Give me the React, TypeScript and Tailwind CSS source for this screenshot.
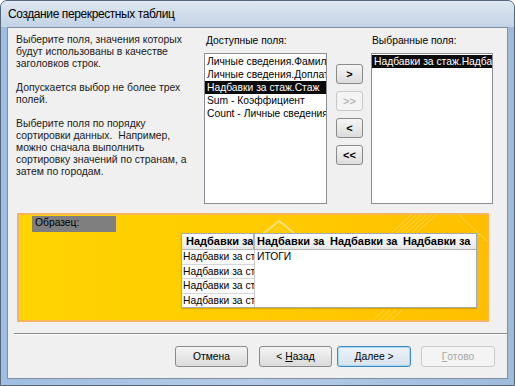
const availableFields = [
  "Личные сведения.Фамилия",
  "Личные сведения.Доплата",
  "Надбавки за стаж.Стаж",
  "Sum - Коэффициент",
  "Count - Личные сведения.Фамилия",
];

function MoveButton({ label, disabled }: { label: string; disabled?: boolean }) {
  return (
    <div
      className={
        "w-[27px] h-[20px] flex items-center justify-center rounded-[3px] border text-[11px] font-bold " +
        (disabled
          ? "border-[#c5c9cc] bg-[#f4f4f4] text-[#b8b8b8]"
          : "border-[#8a8a8a] bg-gradient-to-b from-[#f6f6f6] to-[#dcdcdc] text-black")
      }
    >
      {label}
    </div>
  );
}

function DialogButton({
  children,
  width,
  variant = "normal",
  className = "",
}: {
  children: React.ReactNode;
  width: string;
  variant?: "normal" | "default" | "disabled";
  className?: string;
}) {
  const look =
    variant === "disabled"
      ? "border-[#c8cbce] bg-[#f4f4f4] text-[#a8a8a8]"
      : variant === "default"
      ? "border-[#3c8ac4] bg-gradient-to-b from-[#eef4f9] to-[#d6e2ec] text-black shadow-[inset_0_0_0_1px_#a9d6f5]"
      : "border-[#8a8a8a] bg-gradient-to-b from-[#f4f4f4] to-[#dadada] text-black";
  return (
    <div className={`${width} h-[21px] flex items-center justify-center rounded-[3px] border text-[10.3px] ${look} ${className}`}>
      {children}
    </div>
  );
}

export default function App() {
  return (
    <div className="w-[515px] h-[386px] overflow-hidden bg-white font-['Liberation_Sans',Arial,sans-serif]">
      <div className="w-full h-full flex flex-col rounded-t-[7px] border border-[#56677c] bg-gradient-to-r from-[#9fbde0] via-[#b3cbe8] to-[#9ebbdd]">
        {/* title bar */}
        <div className="h-[26px] shrink-0 flex items-center pl-[7px] rounded-t-[6px] bg-gradient-to-b from-[#dfe8f2] via-[#d0dcea] to-[#c3d3e6] text-[12px] tracking-[-0.4px] text-black">
          Создание перекрестных таблиц
        </div>

        <div className="flex-1 mx-[6px] mb-[6px] border border-[#7f8ea1] bg-[#f0f0f0] flex flex-col text-[10.3px] text-black">
          {/* top section */}
          <div className="flex h-[176px] shrink-0">
            <div className="w-[196px] shrink-0 pl-[8px] pt-[6px] text-[10.4px] leading-[12px] text-[#1a1a1a] whitespace-nowrap">
              <p>
                Выберите поля, значения которых
                <br />
                будут использованы в качестве
                <br />
                заголовков строк.
              </p>
              <p className="mt-[12px]">
                Допускается выбор не более трех
                <br />
                полей.
              </p>
              <p className="mt-[12px]">
                Выберите поля по порядку
                <br />
                сортировки данных.&nbsp; Например,
                <br />
                можно сначала выполнить
                <br />
                сортировку значений по странам, а
                <br />
                затем по городам.
              </p>
            </div>

            <div className="flex flex-col pt-[6px]">
              <div className="h-[13px] leading-[13px] pl-[2px]">Доступные поля:</div>
              <div className="mt-[6px] w-[123px] h-[151px] border border-[#8a8f96] bg-white pt-[1px] overflow-hidden">
                {availableFields.map((f, i) => (
                  <div
                    key={f}
                    className={
                      "h-[13px] leading-[13px] pl-[2px] whitespace-nowrap overflow-hidden " +
                      (i === 2 ? "bg-[#0a0a0a] text-white" : "")
                    }
                  >
                    {f}
                  </div>
                ))}
              </div>
            </div>

            <div className="ml-[9px] pt-[36px] flex flex-col gap-[7px]">
              <MoveButton label=">" />
              <MoveButton label=">>" disabled />
              <MoveButton label="<" />
              <MoveButton label="<<" />
            </div>

            <div className="ml-[8px] flex flex-col pt-[6px]">
              <div className="h-[13px] leading-[13px] pl-[1px]">Выбранные поля:</div>
              <div className="mt-[6px] w-[122px] h-[151px] border border-[#8a8f96] bg-white pt-[1px] overflow-hidden">
                <div className="h-[13px] leading-[13px] pl-[2px] whitespace-nowrap overflow-hidden bg-[#0a0a0a] text-white">
                  Надбавки за стаж.Надбавка
                </div>
              </div>
            </div>
          </div>

          {/* sample */}
          <div className="relative ml-[9px] mt-[9px] w-[472px] h-[109px] shrink-0 border-2 border-[#f8b45c] bg-gradient-to-r from-[#ffd400] via-[#ffcc00] to-[#ffbf00] overflow-hidden">
            <svg className="absolute inset-0 pointer-events-none" width="472" height="109">
              <path d="M230 30 L260 6 L290 30" fill="none" stroke="#ffe27a" strokeWidth="2" />
              <path d="M238 30 L260 12 L282 30" fill="none" stroke="#ffd84a" strokeWidth="1" />
              <g stroke="#ffd95c" strokeWidth="1" opacity="0.8">
                <line x1="370" y1="20" x2="392" y2="0" />
                <line x1="375" y1="20" x2="397" y2="0" />
                <line x1="380" y1="20" x2="402" y2="0" />
                <line x1="385" y1="20" x2="407" y2="0" />
                <line x1="390" y1="20" x2="412" y2="0" />
                <line x1="395" y1="20" x2="417" y2="0" />
                <line x1="440" y1="0" x2="470" y2="28" />
                <line x1="350" y1="109" x2="365" y2="95" />
                <line x1="356" y1="109" x2="371" y2="95" />
                <line x1="362" y1="109" x2="377" y2="95" />
                <line x1="368" y1="109" x2="383" y2="95" />
              </g>
            </svg>

            <div className="absolute left-[13px] top-[1px] w-[84px] h-[16px] bg-[#7f7f7f] pl-[3px] leading-[14px] text-[10.3px] text-black">
              Образец:
            </div>

            {/* preview table */}
            <div className="absolute left-[162px] top-[18px] w-[296px] h-[75px] border border-[#a8a8a8] bg-white flex flex-col text-[10.3px] leading-[13px] shadow-[0_1px_1px_rgba(0,0,0,0.15)]">
              <div className="h-[16px] flex border-b border-[#b4b4b4] bg-gradient-to-b from-[#ffffff] to-[#e6e6e6] font-bold text-[11px] whitespace-nowrap">
                <div className="w-[73px] pl-[4px] overflow-hidden border-r-2 border-[#b0b0b0] leading-[15px]">Надбавки за</div>
                <div className="w-[73px] pl-[2px] overflow-hidden leading-[15px]">Надбавки за</div>
                <div className="w-[73px] pl-[2px] overflow-hidden leading-[15px]">Надбавки за</div>
                <div className="flex-1 pl-[2px] overflow-hidden leading-[15px]">Надбавки за</div>
              </div>
              <div className="flex-1 flex">
                <div className="w-[73px] flex flex-col border-r border-[#c8c8c8] whitespace-nowrap">
                  <div className="flex-1 overflow-hidden pl-[1px] border-b border-[#d6d6e0]">Надбавки за ст</div>
                  <div className="flex-1 overflow-hidden pl-[1px] border-b border-[#d6d6e0]">Надбавки за ст</div>
                  <div className="flex-1 overflow-hidden pl-[1px] border-b border-[#d6d6e0]">Надбавки за ст</div>
                  <div className="flex-1 overflow-hidden pl-[1px]">Надбавки за ст</div>
                </div>
                <div className="flex-1 pl-[2px]">ИТОГИ</div>
              </div>
            </div>
          </div>

          {/* separator */}
          <div className="ml-[6px] mt-[11px] h-[2px] shrink-0 border-t border-[#8c8c8c] border-b border-b-white" />

          {/* buttons */}
          <div className="mt-[11px] flex justify-end pr-[12px]">
            <DialogButton width="w-[73px]">Отмена</DialogButton>
            <DialogButton width="w-[73px]" className="ml-[11px]">
              &lt; <span className="underline ml-[3px]">Н</span>азад
            </DialogButton>
            <DialogButton width="w-[74px]" variant="default" className="ml-[5px]">
              <span className="underline">Д</span>алее &gt;
            </DialogButton>
            <DialogButton width="w-[74px]" variant="disabled" className="ml-[10px]">
              <span className="underline">Г</span>отово
            </DialogButton>
          </div>
        </div>
      </div>
    </div>
  );
}
